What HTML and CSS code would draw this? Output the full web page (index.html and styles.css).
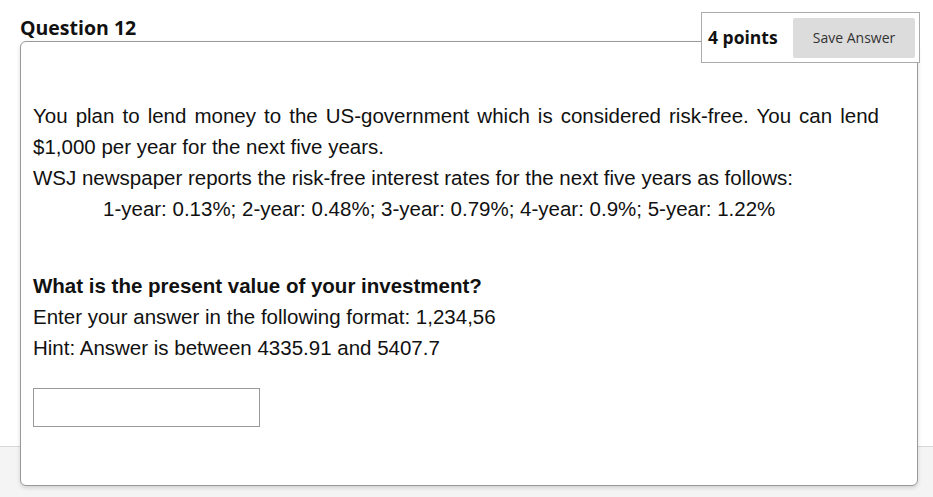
FILE: index.html
```html
<!DOCTYPE html>
<html lang="en">
<head>
<meta charset="utf-8">
<title>Question 12</title>
<link rel="stylesheet" href="styles.css">
</head>
<body>
<div class="page">
  <h2 class="q-title">Question 12</h2>
  <div class="q-meta">
    <span class="points">4 points</span>
    <button class="save-btn" type="button">Save Answer</button>
  </div>
  <div class="card">
    <div class="q-text">
      <p class="just">You plan to lend money to the US-government which is considered risk-free. You can lend $1,000 per year for the next five years.</p>
      <p>WSJ newspaper reports the risk-free interest rates for the next five years as follows:</p>
      <p class="indent">1-year: 0.13%; 2-year: 0.48%; 3-year: 0.79%; 4-year: 0.9%; 5-year: 1.22%</p>
    </div>
    <div class="q-ask">
      <p class="strong">What is the present value of your investment?</p>
      <p>Enter your answer in the following format: 1,234,56</p>
      <p>Hint: Answer is between 4335.91 and 5407.7</p>
    </div>
    <input class="answer" type="text" aria-label="Answer">
  </div>
</div>
</body>
</html>
```

FILE: styles.css
```css
html, body {
  margin: 0;
  padding: 0;
}
body {
  background: linear-gradient(to bottom, #ffffff 0, #ffffff 446px, #d9d9d9 446px, #d9d9d9 447px, #f4f4f4 447px);
  min-height: 497px;
  font-family: "Liberation Sans", Arial, sans-serif;
  color: #111;
}
.page {
  position: relative;
  padding: 16px 0 0 20px;
}
.q-title {
  margin: 0;
  font-family: "Open Sans", sans-serif;
  font-weight: 700;
  font-size: 19.5px;
  line-height: 24px;
  color: #111;
}
.q-meta {
  position: absolute;
  top: 12px;
  right: 13px;
  width: 219px;
  height: 51px;
  box-sizing: border-box;
  border: 1px solid #ababab;
  background: #fff;
  display: flex;
  align-items: center;
  justify-content: space-between;
  padding: 0 4px 0 6px;
  z-index: 2;
}
.points {
  font-family: "Open Sans", sans-serif;
  font-weight: 700;
  font-size: 17.5px;
  color: #111;
  margin-top: -2px;
}
.save-btn {
  width: 122px;
  height: 40px;
  border: none;
  border-radius: 2px;
  background: #dcdcdc;
  font-family: "Open Sans", sans-serif;
  font-size: 14px;
  color: #333;
  padding: 0;
}
.card {
  margin-top: 1px;
  width: 898px;
  height: 445px;
  box-sizing: border-box;
  border: 1px solid #999;
  border-radius: 6px;
  background: #fff;
  box-shadow: 0 2px 4px rgba(0, 0, 0, 0.14);
  padding: 58px 38px 0 12px;
  font-size: 20.5px;
  line-height: 31px;
}
.card p {
  margin: 0;
}
.just {
  text-align: justify;
}
.indent {
  padding-left: 70px;
}
.q-ask {
  margin-top: 46px;
}
.strong {
  font-weight: 700;
}
.answer {
  display: block;
  margin-top: 25px;
  width: 227px;
  height: 39px;
  box-sizing: border-box;
  border: 1px solid #999;
  border-radius: 0;
  background: #fff;
  padding: 0 6px;
  font-family: "Liberation Sans", Arial, sans-serif;
  font-size: 18px;
}
```
